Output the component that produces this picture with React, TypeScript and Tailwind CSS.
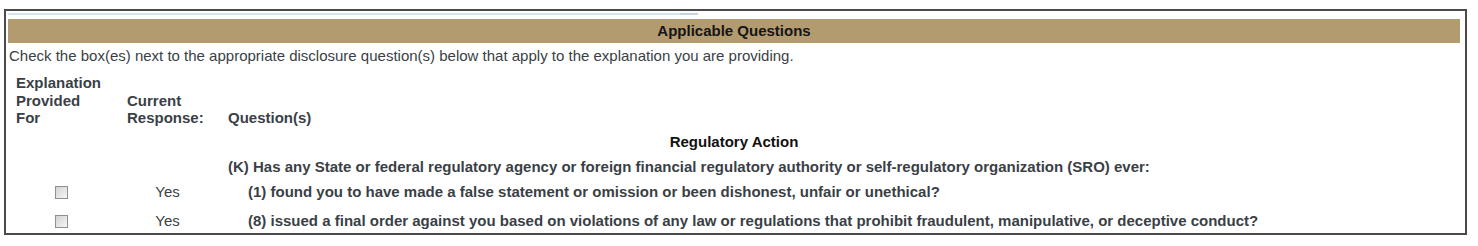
import React from 'react';

const QUESTIONS = [
    { code: '(1)', text: 'found you to have made a false statement or omission or been dishonest, unfair or unethical?' },
    { code: '(8)', text: 'issued a final order against you based on violations of any law or regulations that prohibit fraudulent, manipulative, or deceptive conduct?' },
];

function Checkbox() {
    return (
        <input
            type="checkbox"
            className="appearance-none block w-[13px] h-[13px] m-0 border border-[#8f8f8f] bg-linear-to-br from-[#d2d2d2] to-[#f7f7f7]"
        />
    );
}

export default function App() {
    return (
        <div className="w-[1478px] h-[246px] bg-white pt-[9px] pl-[4px] font-['Liberation_Sans',Arial,sans-serif] text-[15px] leading-[17.25px] text-[#3a3f46]">
            <div className="w-[1463px] h-[226px] border-2 border-[#4a4a4a] pl-[2px] pr-[5px]">
                {/* top strip */}
                <div className="flex mt-[2px] h-[2px]">
                    <div className="w-[672px] bg-[#d3e3f3]" />
                    <div className="w-[18px] bg-[#c9d3dd]" />
                </div>

                {/* Header */}
                <div className="mt-[4px] h-[24px] bg-[#b39b70] flex items-center justify-center font-bold text-[#151515]">
                    Applicable Questions
                </div>

                <p className="mt-[4px] pl-[1px] whitespace-nowrap">
                    Check the box(es) next to the appropriate disclosure question(s) below that apply to the explanation you are providing.
                </p>

                {/* Column headers */}
                <div className="mt-[10px] flex font-bold">
                    <div className="w-[107px] pl-[8px]">
                        Explanation<br />Provided<br />For
                    </div>
                    <div className="w-[105px] pl-[12px] flex flex-col justify-end">
                        <span>Current</span>
                        <span>Response:</span>
                    </div>
                    <div className="pl-[8px] flex flex-col justify-end">Question(s)</div>
                </div>

                <div className="mt-[7px] text-center font-bold text-[#111]">Regulatory Action</div>

                <div className="mt-[8px] pl-[220px] font-bold whitespace-nowrap">
                    (K) Has any State or federal regulatory agency or foreign financial regulatory authority or self-regulatory organization (SRO) ever:
                </div>

                {/* Rows */}
                <div className="mt-[7px] flex flex-col gap-[12px]">
                    {QUESTIONS.map((q) => (
                        <div key={q.code} className="flex items-center">
                            <div className="w-[107px] flex justify-center pt-[2px]">
                                <Checkbox />
                            </div>
                            <div className="w-[105px] text-center">Yes</div>
                            <div className="pl-[28px] font-bold whitespace-nowrap">
                                {q.code} {q.text}
                            </div>
                        </div>
                    ))}
                </div>
            </div>
        </div>
    );
}
